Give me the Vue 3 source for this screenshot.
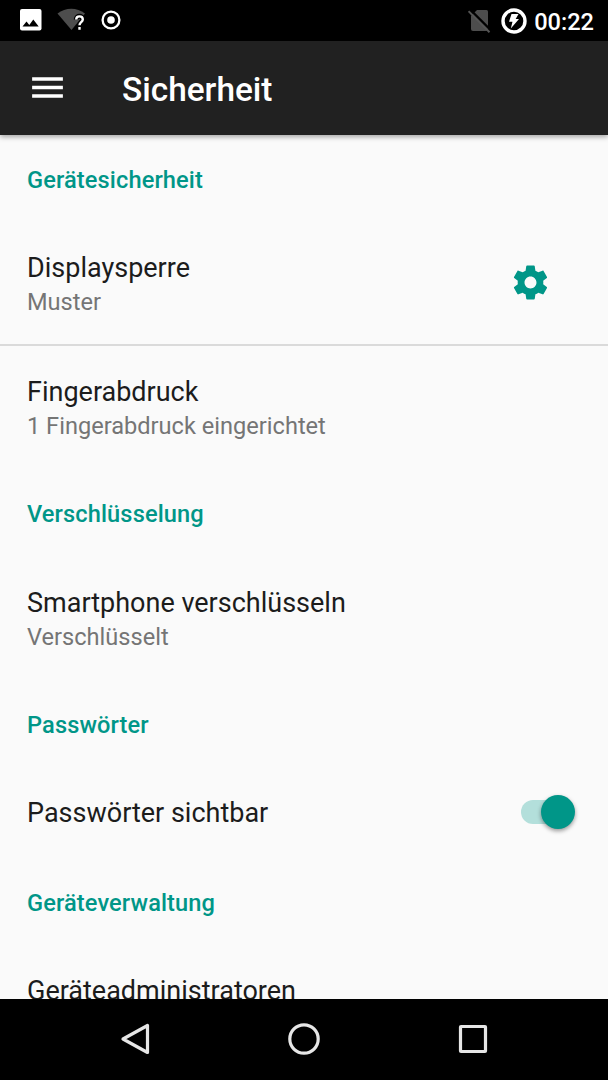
<template>
  <div class="screen">
    <header class="status-bar">
      <div class="status-left">
        <svg class="icon-image" width="22" height="22" viewBox="0 0 22 22">
          <rect width="21.500" height="21.500" rx="2" fill="#fff" />
          <path d="M2.500 17.500 6.500 12.500l2.800 3.400 4-5.400 5.400 7z" fill="#000" />
        </svg>
        <svg class="icon-wifi" width="30" height="26" viewBox="0 0 30 26">
          <path d="M0.500 6.500C8.500 0 20 0 28 6.500L14.500 23z" fill="#4d4d4d" />
          <path class="question-cut" d="M19.200 12.500c0-4.200 6.600-4.200 6.600 0 0 2.600-3.300 2.900-3.300 5.700M22.500 20v2.700" />
          <path class="question" d="M19.200 12.500c0-4.200 6.600-4.200 6.600 0 0 2.600-3.300 2.900-3.300 5.700M22.500 20v2.700" />
        </svg>
        <svg class="icon-record" width="20" height="20" viewBox="0 0 20 20">
          <circle cx="10" cy="10" r="8.400" fill="none" stroke="#fff" stroke-width="2.300" />
          <circle cx="10" cy="10" r="3.800" fill="#fff" />
        </svg>
      </div>
      <div class="status-right">
        <svg class="icon-sim" width="23" height="24" viewBox="0 0 23 24">
          <path d="M9 1h9.500q1.500 0 1.500 1.500V20q0 2-2 2H5q-2 0-2-2V7z" fill="#4d4d4d" />
          <path d="M1.500 0 23 21.500" stroke="#000" stroke-width="2.400" />
          <path d="M0.500 2.200 21.500 23.200" stroke="#555" stroke-width="2" />
        </svg>
        <svg class="icon-battery" width="26" height="26" viewBox="0 0 26 26">
          <circle cx="13" cy="13" r="11" fill="none" stroke="#fff" stroke-width="3.400" />
          <path d="M10.500 6h7l-2.800 5H18l-8.200 9.500 1.700-6.800H8z" fill="#fff" />
        </svg>
        <span class="clock">00:22</span>
      </div>
    </header>

    <div class="app-bar">
      <svg class="icon-menu" width="41" height="41" viewBox="0 0 24 24">
        <path d="M3 18h18v-2H3v2zm0-5h18v-2H3v2zm0-7v2h18V6H3z" fill="#fff" />
      </svg>
      <h1>Sicherheit</h1>
    </div>

    <main class="list">
      <section v-for="group in groups" :key="group.name">
        <h2>{{ group.name }}</h2>
        <div
          v-for="item in group.items"
          :key="item.title"
          class="item"
          :class="{ single: !item.summary, divided: item.divided }"
        >
          <div class="text">
            <div class="title">{{ item.title }}</div>
            <div v-if="item.summary" class="summary">{{ item.summary }}</div>
          </div>
          <svg v-if="item.widget === 'gear'" class="gear" width="41" height="41" viewBox="0 0 24 24">
            <path
              fill="#009688"
              d="M19.430 12.980c.04-.32.070-.64.070-.98s-.03-.66-.07-.98l2.110-1.650c.19-.15.240-.42.120-.64l-2-3.460c-.12-.22-.39-.3-.61-.22l-2.490 1c-.52-.4-1.080-.73-1.690-.98l-.38-2.650C14.460 2.180 14.250 2 14 2h-4c-.25 0-.46.180-.49.420l-.38 2.650c-.61.250-1.170.590-1.690.980l-2.490-1c-.23-.09-.49 0-.61.220l-2 3.460c-.13.220-.07.490.120.640l2.110 1.650c-.04.320-.07.650-.07.980s.03.660.070.980l-2.110 1.650c-.19.150-.24.420-.12.640l2 3.460c.12.220.390.300.610.220l2.490-1c.52.400 1.080.730 1.690.980l.38 2.650c.03.240.240.420.490.420h4c.25 0 .46-.18.490-.42l.38-2.650c.61-.25 1.170-.59 1.690-.98l2.490 1c.23.090.490 0 .61-.22l2-3.460c.12-.22.070-.49-.12-.64l-2.110-1.650zM12 15.500c-1.930 0-3.500-1.570-3.500-3.500s1.570-3.500 3.500-3.500 3.500 1.570 3.500 3.500-1.570 3.500-3.500 3.500z"
            />
          </svg>
          <button v-if="item.widget === 'switch'" class="switch" :class="{ on: visible }" @click="visible = !visible">
            <span class="thumb"></span>
          </button>
        </div>
      </section>
    </main>

    <nav class="nav-bar">
      <svg width="34" height="34" viewBox="0 0 34 34">
        <path d="M29.500 3.500v27L5 17z" />
      </svg>
      <svg width="34" height="34" viewBox="0 0 34 34">
        <circle cx="17" cy="17" r="14.200" />
      </svg>
      <svg width="34" height="34" viewBox="0 0 34 34">
        <rect x="4.500" y="4.500" width="25" height="25" rx="0.500" />
      </svg>
    </nav>
  </div>
</template>

<script setup>
import { ref } from 'vue'

const visible = ref(true)

const groups = [
  {
    name: 'Gerätesicherheit',
    items: [
      { title: 'Displaysperre', summary: 'Muster', widget: 'gear', divided: true },
      { title: 'Fingerabdruck', summary: '1 Fingerabdruck eingerichtet' }
    ]
  },
  {
    name: 'Verschlüsselung',
    items: [{ title: 'Smartphone verschlüsseln', summary: 'Verschlüsselt' }]
  },
  {
    name: 'Passwörter',
    items: [{ title: 'Passwörter sichtbar', widget: 'switch' }]
  },
  {
    name: 'Geräteverwaltung',
    items: [{ title: 'Geräteadministratoren' }]
  }
]
</script>

<style>
body {
  margin: 0;
}
</style>

<style scoped>
.screen {
  display: flex;
  flex-direction: column;
  width: 608px;
  height: 1080px;
  overflow: hidden;
  background: #fafafa;
  font-family: Roboto, sans-serif;
}
.status-bar {
  display: flex;
  flex: none;
  justify-content: space-between;
  box-sizing: border-box;
  height: 41px;
  padding: 0 14px 0 20px;
  background: #000;
}
.status-left,
.status-right {
  display: flex;
  align-items: center;
}
.status-left {
  height: 40px;
}
.icon-wifi {
  margin-left: 15px;
}
.icon-record {
  margin-left: 14px;
}
.question,
.question-cut {
  fill: none;
  stroke: #fff;
  stroke-width: 2.4;
}
.question-cut {
  stroke: #000;
  stroke-width: 5;
}
.icon-battery {
  margin-left: 10px;
}
.clock {
  margin-left: 7px;
  padding-top: 2px;
  color: #fff;
  font-size: 23.6px;
  font-weight: 500;
  line-height: 40px;
}
.app-bar {
  display: flex;
  flex: none;
  align-items: center;
  z-index: 1;
  height: 94px;
  padding-left: 27px;
  background: #212121;
  box-shadow: 0 2px 5px rgba(0, 0, 0, 0.35);
}
.icon-menu {
  margin-bottom: 1px;
}
h1 {
  margin: 0 0 0 54px;
  padding-top: 3px;
  color: #fff;
  font-size: 33.4px;
  font-weight: 500;
  line-height: 40px;
}
.list {
  flex: 1;
  min-height: 0;
  overflow: hidden;
}
h2 {
  height: 88px;
  margin: 0;
  padding-left: 27px;
  color: #009688;
  font-size: 23.6px;
  font-weight: 500;
  letter-spacing: 0.12px;
  line-height: 90px;
}
.item {
  display: flex;
  align-items: center;
  justify-content: space-between;
  box-sizing: border-box;
  height: 123px;
  padding: 0 33px 0 27px;
}
.item.single {
  height: 90px;
}
.item.divided {
  border-bottom: 2px solid #dadada;
}
.title {
  color: #1c1c1c;
  font-size: 27px;
  line-height: 36px;
}
.summary {
  color: #757575;
  font-size: 23.6px;
  line-height: 32px;
}
.gear {
  margin: 0 24px 2px 0;
}
.switch {
  position: relative;
  width: 50px;
  height: 24px;
  margin: 0 4px 3px 0;
  padding: 0;
  border: 0;
  border-radius: 12px;
  background: #bdbdbd;
}
.switch.on {
  background: #b3dfdb;
}
.thumb {
  position: absolute;
  top: -5px;
  left: -4px;
  width: 34px;
  height: 34px;
  border-radius: 50%;
  background: #fafafa;
  box-shadow: 0 2px 4px rgba(0, 0, 0, 0.4);
}
.on .thumb {
  left: 20px;
  background: #009688;
}
.nav-bar {
  display: flex;
  flex: none;
  align-items: center;
  justify-content: center;
  gap: 135px;
  height: 81px;
  background: #000;
}
.nav-bar svg {
  margin-bottom: 1px;
  fill: none;
  stroke: #e6e6e6;
  stroke-width: 3.2;
  stroke-linejoin: round;
}
</style>
